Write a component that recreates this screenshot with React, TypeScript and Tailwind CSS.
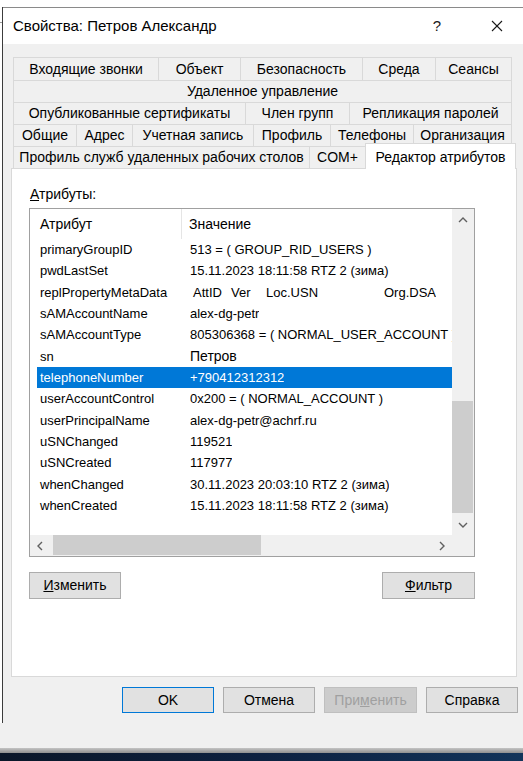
import React from "react";

type Row = { a: string; v: React.ReactNode; sel?: boolean; cyr?: boolean };

const rows: Row[] = [
  { a: "primaryGroupID", v: "513 = ( GROUP_RID_USERS )" },
  { a: "pwdLastSet", v: "15.11.2023 18:11:58 RTZ 2 (зима)" },
  {
    a: "replPropertyMetaData",
    v: (
      <span className="flex pl-[3px]">
        <span className="w-[38px]">AttID</span>
        <span className="w-[35px]">Ver</span>
        <span className="w-[118px]">Loc.USN</span>
        <span>Org.DSA</span>
      </span>
    ),
  },
  { a: "sAMAccountName", v: "alex-dg-petr" },
  { a: "sAMAccountType", v: "805306368 = ( NORMAL_USER_ACCOUNT )" },
  { a: "sn", v: "Петров", cyr: true },
  { a: "telephoneNumber", v: "+790412312312", sel: true },
  { a: "userAccountControl", v: "0x200 = ( NORMAL_ACCOUNT )" },
  { a: "userPrincipalName", v: "alex-dg-petr@achrf.ru" },
  { a: "uSNChanged", v: "119521" },
  { a: "uSNCreated", v: "117977" },
  { a: "whenChanged", v: "30.11.2023 20:03:10 RTZ 2 (зима)" },
  { a: "whenCreated", v: "15.11.2023 18:11:58 RTZ 2 (зима)" },
];

function Tab({ w, children, last }: { w: string; children: React.ReactNode; last?: boolean }) {
  return (
    <div
      className={`${w} h-full flex items-center justify-center border-l border-t border-[#d9d9d9] bg-[#f0f0f0] whitespace-nowrap ${
        last ? "border-r" : ""
      }`}
    >
      {children}
    </div>
  );
}

function Chevron({ dir }: { dir: "up" | "down" | "left" | "right" }) {
  const pts: Record<string, string> = {
    up: "1,6 5,2 9,6",
    down: "1,2 5,6 9,2",
    left: "6,1 2,5 6,9",
    right: "3,1 7,5 3,9",
  };
  const vertical = dir === "up" || dir === "down";
  return (
    <svg
      width={vertical ? 10 : 9}
      height={vertical ? 8 : 10}
      viewBox={vertical ? "0 0 10 8" : "0 0 9 10"}
      fill="none"
      stroke="#606060"
      strokeWidth="1.4"
    >
      <polyline points={pts[dir]} />
    </svg>
  );
}

function Btn({
  children,
  w = "w-[92px]",
  extra = "",
}: {
  children: React.ReactNode;
  w?: string;
  extra?: string;
}) {
  return (
    <div
      className={`${w} h-full flex items-center justify-center border bg-[#e1e1e1] border-[#adadad] text-[14px] text-black ${extra}`}
    >
      {children}
    </div>
  );
}

export default function App() {
  return (
    <div className="w-[523px] h-[761px] flex flex-col bg-[#f0f0f0] overflow-hidden font-['Liberation_Sans',Arial,sans-serif] text-black">
      {/* top desktop strip */}
      <div className="h-[7px] bg-white shrink-0" />

      <div className="flex flex-1 min-h-0">
        {/* left desktop sliver */}
        <div className="w-[3px] shrink-0 flex flex-col">
          <div className="h-[716px] bg-white border-r border-[#3c3c3c] flex flex-col">
            <div className="h-[15px]" />
            <div className="h-[1px] bg-[#9a9a9a]" />
          </div>
          <div className="flex-1 bg-[#f0f0f0]" />
        </div>

        {/* window */}
        <div className="flex-1 flex flex-col border-t border-[#8a8a8a] min-w-0">
          {/* title bar */}
          <div className="h-[36px] bg-white flex items-center shrink-0">
            <div className="pl-[10px] text-[15px] text-black flex-1 whitespace-nowrap">
              Свойства: Петров Александр
            </div>
            <div className="w-[46px] mr-[14px] h-full flex items-center justify-center text-[15px] text-[#1a1a1a]">?</div>
            <div className="w-[46px] mr-[3px] h-full flex items-center justify-center">
              <svg width="12" height="12" viewBox="0 0 12 12" stroke="#1a1a1a" strokeWidth="1.1">
                <line x1="1" y1="1" x2="11" y2="11" />
                <line x1="11" y1="1" x2="1" y2="11" />
              </svg>
            </div>
          </div>

          {/* body */}
          <div className="flex-1 flex flex-col bg-[#f0f0f0] pt-[13px] min-h-0">
            {/* tabs */}
            <div className="ml-[10px] flex flex-col text-[14px]">
              <div className="h-[23px] flex">
                <Tab w="w-[145px]">Входящие звонки</Tab>
                <Tab w="w-[82px]">Объект</Tab>
                <Tab w="w-[122px]">Безопасность</Tab>
                <Tab w="w-[73px]">Среда</Tab>
                <Tab w="w-[77px]" last>
                  Сеансы
                </Tab>
              </div>
              <div className="h-[22px] flex">
                <Tab w="w-[499px]" last>
                  Удаленное управление
                </Tab>
              </div>
              <div className="h-[22px] flex">
                <Tab w="w-[232px]">Опубликованные сертификаты</Tab>
                <Tab w="w-[104px]">Член групп</Tab>
                <Tab w="w-[163px]" last>
                  Репликация паролей
                </Tab>
              </div>
              <div className="h-[22px] flex">
                <Tab w="w-[63px]">Общие</Tab>
                <Tab w="w-[56px]">Адрес</Tab>
                <Tab w="w-[121px]">Учетная запись</Tab>
                <Tab w="w-[77px]">Профиль</Tab>
                <Tab w="w-[83px]">Телефоны</Tab>
                <Tab w="w-[99px]" last>
                  Организация
                </Tab>
              </div>
              <div className="h-[22px] flex">
                <Tab w="w-[296px]">Профиль служб удаленных рабочих столов</Tab>
                <Tab w="w-[56px]">COM+</Tab>
                <div className="relative z-10 w-[151px] h-[26px] -mt-[3px] flex items-start justify-center pt-[3px] bg-white border-l border-t border-r border-[#d9d9d9] whitespace-nowrap">
                  Редактор атрибутов
                </div>
              </div>
            </div>

            {/* panel */}
            <div className="ml-[8px] mr-[6px] h-[509px] shrink-0 bg-white border border-[#d9d9d9] flex flex-col pl-[17px] pt-[17px]">
              <div className="h-[16px] ml-[1px] text-[14px] leading-[16px]">
                <span className="underline underline-offset-1">А</span>трибуты:
              </div>

              {/* list box */}
              <div className="mt-[6px] w-[446px] h-[349px] border border-[#a0a0a0] flex flex-col">
                <div className="h-[326px] flex">
                  {/* content */}
                  <div className="w-[422px] bg-white pl-[7px] overflow-hidden flex flex-col">
                    <div className="h-[30px] flex text-[14px] shrink-0">
                      <div className="w-[145px] h-full pl-[3px] flex items-center border-r border-[#e5e5e5]">
                        Атрибут
                      </div>
                      <div className="pl-[7px] flex items-center">Значение</div>
                    </div>
                    {rows.map((r) => (
                      <div
                        key={r.a}
                        className={`h-[21.33px] shrink-0 flex items-center text-[13px] whitespace-nowrap ${
                          r.sel ? "bg-[#0078d7] text-white" : ""
                        }`}
                      >
                        <div className="w-[153px] pl-[3px] shrink-0">{r.a}</div>
                        <div className={`overflow-hidden ${r.cyr ? "text-[14px]" : ""}`}>{r.v}</div>
                      </div>
                    ))}
                  </div>
                  {/* vertical scrollbar */}
                  <div className="w-[22px] bg-[#f0f0f0] flex flex-col">
                    <div className="h-[21px] flex items-center justify-center">
                      <Chevron dir="up" />
                    </div>
                    <div className="flex-1 flex flex-col pr-[1px]">
                      <div className="mt-[171px] h-[112px] bg-[#cdcdcd]" />
                    </div>
                    <div className="h-[21px] flex items-center justify-center">
                      <Chevron dir="down" />
                    </div>
                  </div>
                </div>
                {/* horizontal scrollbar */}
                <div className="h-[21px] flex bg-[#f0f0f0]">
                  <div className="w-[21px] flex items-center justify-center">
                    <Chevron dir="left" />
                  </div>
                  <div className="w-[380px] flex">
                    <div className="ml-[2px] w-[208px] h-[20px] bg-[#cdcdcd]" />
                  </div>
                  <div className="w-[21px] flex items-center justify-center">
                    <Chevron dir="right" />
                  </div>
                  <div className="w-[22px]" />
                </div>
              </div>

              {/* panel buttons */}
              <div className="mt-[15px] h-[27px] w-[446px] flex justify-between">
                <Btn>
                  <span>
                    <span className="underline underline-offset-1">И</span>зменить
                  </span>
                </Btn>
                <Btn w="w-[93px]">
                  <span>
                    <span className="underline underline-offset-1">Ф</span>ильтр
                  </span>
                </Btn>
              </div>
            </div>

            {/* dialog buttons */}
            <div className="mt-[10px] h-[26px] flex justify-end gap-[9px] pr-[5px]">
              <Btn extra="!border-[#0078d7]">OK</Btn>
              <Btn>Отмена</Btn>
              <Btn w="w-[93px]" extra="!bg-[#cccccc] !border-[#bfbfbf] !text-[#a0a0a0]">
                <span>
                  При<span className="underline underline-offset-1">м</span>енить
                </span>
              </Btn>
              <Btn>Справка</Btn>
            </div>
            <div className="flex-1" />
          </div>
        </div>
      </div>

      {/* bottom strips */}
      <div className="h-[5px] shrink-0 bg-gradient-to-b from-[#c4c4c4] to-[#8f8f8f]" />
      <div className="h-[8px] shrink-0 bg-gradient-to-r from-[#0a1628] via-[#0d2140] to-[#12345a]" />
    </div>
  );
}
